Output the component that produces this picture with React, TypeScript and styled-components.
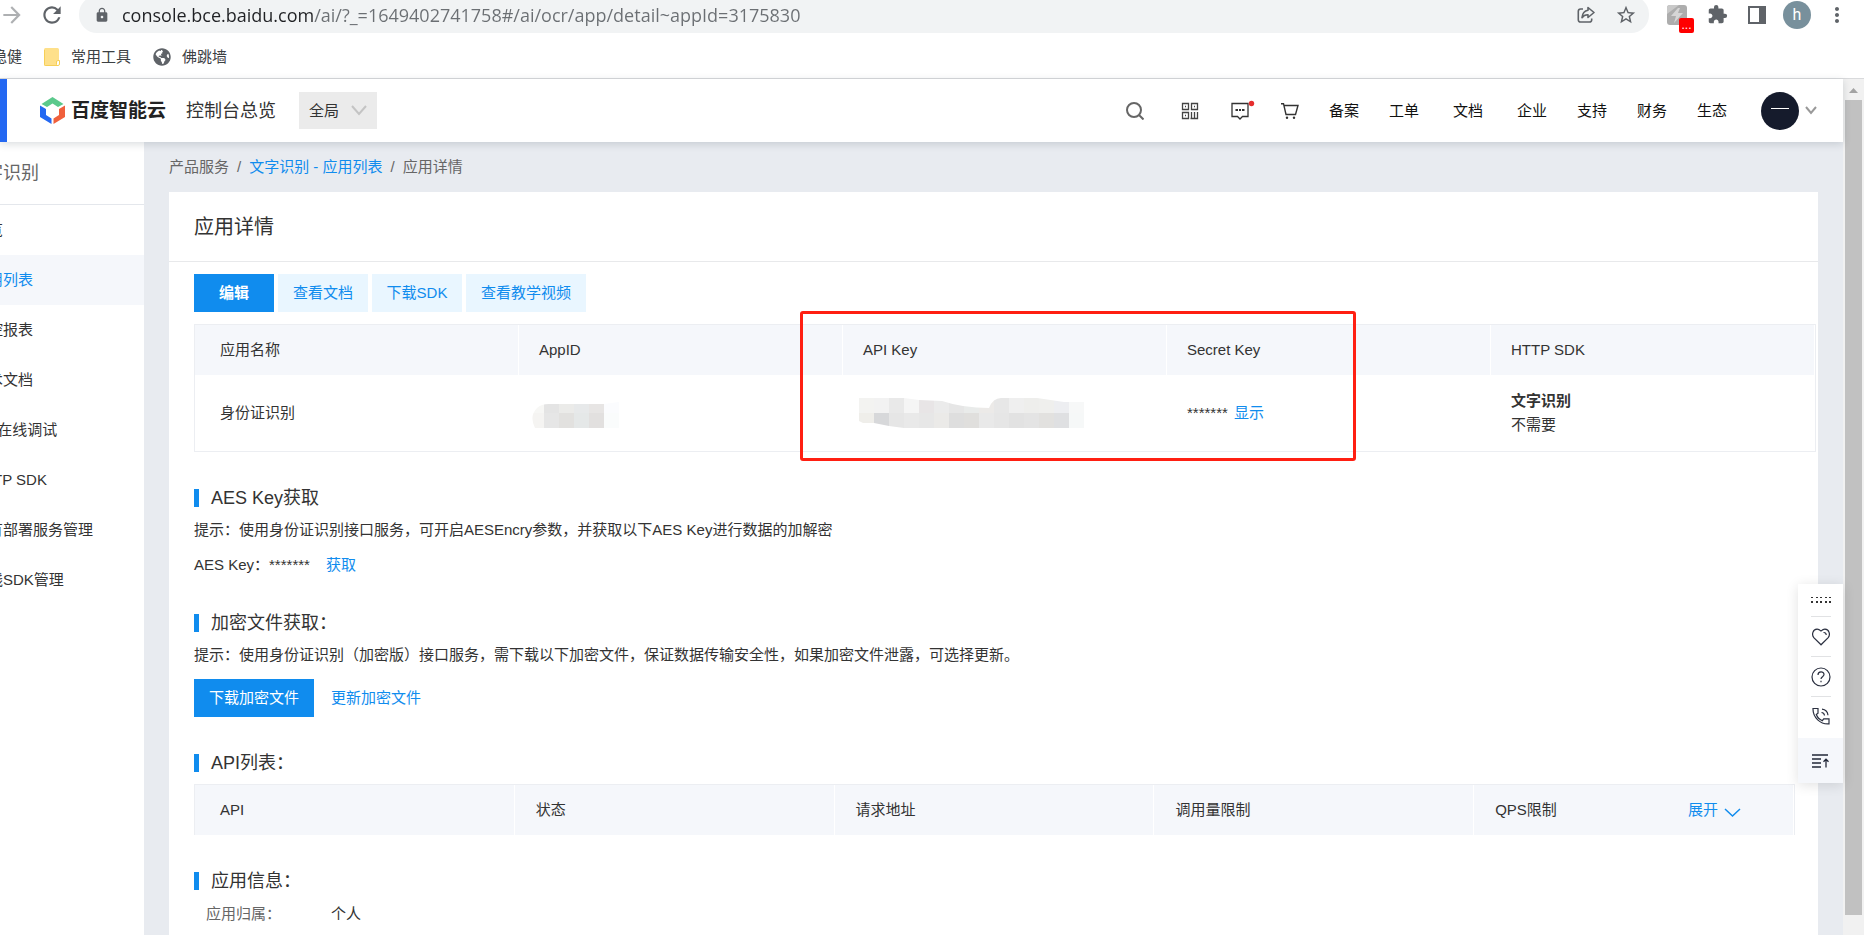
import React from "react";
import styled, { createGlobalStyle, css } from "styled-components";
import { FaGlobeAmericas } from "react-icons/fa";
import {
  MdArrowForward,
  MdExtension,
  MdLock,
  MdMoreVert,
  MdRefresh,
  MdStarBorder,
} from "react-icons/md";

const color = {
  text: "#333",
  muted: "#666",
  blue: "#108cee",
  paleBlue: "#e9f6ff",
  head: "#f5f7fb",
  line: "#eceef2",
  page: "#e8ebf0",
  chrome: "#5f6368",
};

const GlobalStyle = createGlobalStyle`
  *, *::before, *::after { box-sizing: border-box; }
  body {
    margin: 0;
    overflow: hidden;
    background: #fff;
    color: ${color.text};
    font-family: "Liberation Sans", "Noto Sans CJK SC", sans-serif;
    font-size: 15px;
    line-height: 24px;
  }
  button, input, select { font: inherit; color: inherit; }
  button { border: 0; padding: 0; background: none; cursor: pointer; }
  a { color: inherit; text-decoration: none; }
  svg { display: block; flex: none; }
`;

const Window = styled.div`
  display: flex;
  flex-direction: column;
  height: 100vh;
  overflow: hidden;
`;

/* ---------- browser bars ---------- */

const Toolbar = styled.div`
  display: flex;
  align-items: center;
  height: 33px;
  padding: 0 7px 4px 0;
  color: ${color.chrome};
`;

const ToolButton = styled.button<{ $width?: number; $faded?: boolean }>`
  display: flex;
  align-items: center;
  justify-content: center;
  flex: none;
  width: ${(p) => p.$width ?? 40}px;
  height: 28px;
  opacity: ${(p) => (p.$faded ? 0.5 : 1)};
`;

const NavButtons = styled.div`
  display: flex;
  gap: 15px;
  margin-right: 14px;
`;

const AddressBar = styled.form`
  display: flex;
  align-items: center;
  flex: 1;
  height: 37px;
  margin-right: 8px;
  padding: 0 3px 0 15px;
  border-radius: 18px;
  background: #f1f3f4;
`;

const AddressInput = styled.input`
  flex: 1;
  min-width: 0;
  height: 28px;
  margin-left: 12px;
  padding: 0;
  border: 0;
  outline: 0;
  color: #202124;
  font-family: "Open Sans", sans-serif;
  font-size: 18px;
  background: linear-gradient(90deg, #202124 191px, #6b6f73 191px);
  background-clip: text;
  -webkit-background-clip: text;
  -webkit-text-fill-color: transparent;
`;

const ExtensionMark = styled.span`
  position: relative;
  display: block;
  width: 20px;
  height: 20px;
`;

const ExtensionBadge = styled.span`
  position: absolute;
  left: 12px;
  top: 13px;
  width: 15px;
  height: 15px;
  border-radius: 2px;
  background: #f00;
  color: #fff;
  font-size: 12px;
  line-height: 14px;
  text-align: center;
`;

const Profile = styled.span`
  width: 28px;
  height: 28px;
  border-radius: 50%;
  background: #78909c;
  color: #fff;
  font-family: Roboto, sans-serif;
  font-size: 16px;
  line-height: 28px;
`;

const Bookmarks = styled.nav`
  display: flex;
  align-items: center;
  gap: 22px;
  height: 46px;
  margin-left: -8px;
  padding-top: 2px;
  border-bottom: 1px solid #d9dadc;
  color: #3c4043;
`;

const Bookmark = styled.a`
  display: flex;
  align-items: center;
  gap: 11px;
  white-space: nowrap;
`;

/* ---------- console frame ---------- */

const Viewport = styled.div`
  display: flex;
  flex: 1;
  min-height: 0;
`;

const Console = styled.div`
  position: relative;
  display: flex;
  flex-direction: column;
  flex: 1;
  min-width: 0;
`;

const Scrollbar = styled.div`
  display: flex;
  flex-direction: column;
  align-items: center;
  gap: 7px;
  width: 21px;
  padding: 9px 0 20px;
  background: #f1f1f1;
`;

const ScrollThumb = styled.div`
  flex: 1;
  width: 17px;
  background: #c1c1c1;
`;

const Header = styled.header`
  position: relative;
  z-index: 2;
  display: flex;
  align-items: center;
  flex: none;
  height: 63px;
  padding-right: 26px;
  border-left: 7px solid #2468f2;
  background: #fff;
  box-shadow: 0 2px 8px rgba(20, 40, 50, 0.16);
`;

const Logo = styled.a`
  display: flex;
  align-items: center;
  gap: 6px;
  margin: 0 20px 0 33px;
  color: #222;
  font-size: 19px;
  font-weight: 700;
  white-space: nowrap;
`;

const Overview = styled.a`
  margin-right: 23px;
  font-size: 18px;
  white-space: nowrap;
`;

const RegionPicker = styled.label`
  display: grid;
  align-items: center;
  width: 78px;
  height: 37px;
  background: #ebebeb;

  select,
  svg {
    grid-area: 1 / 1;
  }
  select {
    height: 37px;
    padding: 0 10px;
    border: 0;
    background: transparent;
    appearance: none;
  }
  svg {
    justify-self: end;
    margin-right: 10px;
    pointer-events: none;
  }
`;

const Shortcuts = styled.div`
  display: flex;
  align-items: center;
  gap: 32px;
  margin-left: auto;
`;

const SearchButton = styled.button`
  margin-right: 5px;
`;

const HeaderLink = styled.a<{ $wide?: boolean }>`
  margin-left: ${(p) => (p.$wide ? 34 : 30)}px;
  color: #111;
  white-space: nowrap;
`;

const Account = styled.button`
  display: flex;
  align-items: center;
  gap: 6px;
  margin-left: 34px;
`;

const Avatar = styled.span`
  display: flex;
  align-items: center;
  justify-content: center;
  width: 38px;
  height: 38px;
  border-radius: 50%;
  background: #151b2c;

  &::after {
    content: "";
    width: 18px;
    height: 1px;
    margin-bottom: 4px;
    background: #fff;
  }
`;

const Body = styled.div`
  display: flex;
  flex: 1;
  min-height: 0;
  background: ${color.page};
`;

const Sidebar = styled.aside`
  flex: none;
  width: 144px;
  overflow: hidden;
  background: #fff;
  white-space: nowrap;
`;

const SidebarTitle = styled.h2`
  height: 63px;
  margin: 0;
  border-bottom: 1px solid #e4e7ec;
  color: ${color.muted};
  font-size: 18px;
  font-weight: 400;
  line-height: 62px;
  text-indent: -33px;
`;

const SidebarLink = styled.a<{ $active?: boolean }>`
  display: block;
  height: 50px;
  line-height: 50px;
  text-indent: -27px;
  ${(p) =>
    p.$active &&
    css`
      background: ${color.head};
      color: ${color.blue};
    `}
`;

const Main = styled.main`
  flex: 1;
  min-width: 0;
  padding: 0 25px;
`;

const Breadcrumb = styled.nav`
  display: flex;
  align-items: center;
  gap: 8px;
  height: 50px;
  color: ${color.muted};
`;

const Link = styled.a`
  color: ${color.blue};
`;

/* ---------- detail card ---------- */

const Card = styled.section`
  min-height: 100%;
  background: #fff;
`;

const CardTitle = styled.h1`
  margin: 0;
  padding: 2px 25px 0;
  border-bottom: 1px solid #e8e9eb;
  font-size: 20px;
  font-weight: 400;
  line-height: 67px;
`;

const CardBody = styled.div`
  padding: 12px 2px 40px 25px;
`;

const Actions = styled.div`
  display: flex;
  gap: 4px;
  margin-bottom: 12px;
`;

const Button = styled.button<{ $primary?: boolean; $strong?: boolean; $width: number }>`
  width: ${(p) => p.$width}px;
  height: 38px;
  background: ${(p) => (p.$primary ? color.blue : color.paleBlue)};
  color: ${(p) => (p.$primary ? "#fff" : color.blue)};
  font-weight: ${(p) => (p.$strong ? 700 : 400)};
`;

const TableFrame = styled.div`
  position: relative;
`;

const Highlight = styled.div`
  position: absolute;
  top: -13px;
  bottom: -9px;
  left: calc(40% - 43px);
  right: calc(20% + 136px);
  border: 3px solid #ff1f12;
  border-radius: 3px;
  pointer-events: none;
`;

const Table = styled.table`
  width: 100%;
  border: 1px solid ${color.line};
  border-collapse: separate;
  border-spacing: 0;
  table-layout: fixed;
  text-align: left;

  th,
  td {
    padding: 0 20px;
    font-weight: 400;
  }
  th {
    height: 50px;
    border-right: 1px solid #fff;
    background: ${color.head};
  }
  td {
    height: 76px;
  }
  th:first-child,
  td:first-child {
    padding-left: 25px;
  }
`;

const ApiTable = styled(Table)`
  width: calc(100% - 21px);
  border-bottom: 0;

  th {
    padding: 0 20px 0 21px;
  }
`;

const LastHead = styled.div`
  display: flex;
  justify-content: space-between;
  padding-right: 32px;
`;

const ExpandButton = styled.button`
  display: flex;
  align-items: center;
  gap: 6px;
  color: ${color.blue};

  svg {
    margin-top: 6px;
  }
`;

const Section = styled.section`
  margin-top: 33px;
`;

const SectionTitle = styled.h2<{ $gap?: number }>`
  display: flex;
  align-items: center;
  gap: 12px;
  margin: 0 0 ${(p) => p.$gap ?? 7}px;
  font-size: 18px;
  font-weight: 400;
  line-height: 26px;

  &::before {
    content: "";
    width: 5px;
    height: 18px;
    background: ${color.blue};
  }
`;

const Tip = styled.p`
  margin: 0;
`;

const Masked = styled.span<{ $gap: number }>`
  margin-right: ${(p) => p.$gap}px;
`;

const KeyLine = styled.p`
  margin: 11px 0 0;
`;

const FileLine = styled.div`
  display: flex;
  align-items: center;
  gap: 17px;
  margin-top: 12px;
`;

const InfoList = styled.dl`
  display: grid;
  grid-template-columns: 125px 1fr;
  margin: 0;
  padding-left: 12px;

  dt {
    color: ${color.muted};
  }
  dd {
    margin: 0;
  }
`;

const MosaicSvg = styled.svg`
  margin: 0 0 0 -8px;
`;

/* ---------- floating helper ---------- */

const Helper = styled.div`
  position: absolute;
  z-index: 3;
  right: 0;
  bottom: 152px;
  display: flex;
  flex-direction: column;
  align-items: center;
  width: 45px;
  background: #fff;
  box-shadow: 0 2px 12px rgba(0, 0, 0, 0.12);
`;

const HelperButton = styled.button<{ $height?: number; $filled?: boolean; $line?: boolean }>`
  display: flex;
  align-items: center;
  justify-content: center;
  width: ${(p) => (p.$filled ? "100%" : "20px")};
  height: ${(p) => p.$height ?? 40}px;
  margin-top: ${(p) => (p.$filled ? 4 : 0)}px;
  border-bottom: ${(p) => (p.$line ? "1px solid #e1e2e4" : "0")};
  background: ${(p) => (p.$filled ? color.head : "none")};
`;

/* ---------- drawings ---------- */

const Chevron = ({ width, height, stroke, weight = 2 }: { width: number; height: number; stroke: string; weight?: number }) => (
  <svg width={width} height={height} viewBox={`0 0 ${width} ${height}`} fill="none" stroke={stroke} strokeWidth={weight}>
    <path d={`M1 1 L${width / 2} ${height - 2} L${width - 1} 1`} />
  </svg>
);

const ShareIcon = () => (
  <svg width="18" height="18" viewBox="0 0 18 18" fill="none" stroke={color.chrome} strokeWidth="1.6" strokeLinejoin="round">
    <path d="M6 3H3.6A2.3 2.3 0 0 0 1.3 5.300v8.400A2.300 2.300 0 0 0 3.600 16h8.800a2.300 2.300 0 0 0 2.300-2.300V12.500" />
    <path d="M11 1.500 17 6.500 11 11.500V8.700C8.500 8.600 6.500 9.400 5 11.700 5.400 7.600 7.300 4.800 11 4.300Z" />
  </svg>
);

const PanelIcon = () => (
  <svg width="18" height="18" viewBox="0 0 18 18">
    <path d="M0 0h18v18H0zM2 2v14h9V2z" fill={color.chrome} fillRule="evenodd" />
  </svg>
);

const BoltIcon = () => (
  <svg width="20" height="20" viewBox="0 0 20 20">
    <rect width="20" height="20" rx="3" fill="#adadad" />
    <path d="M0 3a3 3 0 0 1 3-3h9L0 9z" fill="#c9c9c9" />
    <path d="M11 3 4 11h5l-2 7 9-10h-5l2-5z" fill="#d6d6d6" />
  </svg>
);

const FolderIcon = () => (
  <svg width="16" height="18" viewBox="0 0 16 18">
    <path d="M1.500 0h12A1.500 1.500 0 0 1 15 1.500V12h-2v6H1.500A1.500 1.500 0 0 1 0 16.500v-15A1.500 1.500 0 0 1 1.500 0z" fill="#fee08a" />
    <path d="M.5 2v14.500a1 1 0 0 0 1 1H14a1.500 1.500 0 0 0 1.500-1.500v-3.500H14a1.500 1.500 0 0 0-1.500 1.500v2.500" fill="none" stroke="#f6cf57" />
  </svg>
);

const LogoIcon = () => (
  <svg width="25" height="27" viewBox="0 0 25 27">
    <path d="M1.500 7 12.500 0l11 7-5.500 3-5.500-3.500L7 10z" fill="#5bc98c" />
    <path d="M0 8.500 6 12v6l5.500 3.500V27L0 20z" fill="#2468f2" />
    <path d="M25 8.500 19 12v6l-5.500 3.500V27L25 20z" fill="#f0603c" />
  </svg>
);

const SearchIcon = () => (
  <svg width="18" height="18" viewBox="0 0 18 18" fill="none" stroke="#666" strokeWidth="2">
    <circle cx="8" cy="8" r="7" />
    <path d="m13 13 4.500 4.500" />
  </svg>
);

const QrIcon = () => (
  <svg width="18" height="18" viewBox="0 0 18 18" fill="none" stroke="#444" strokeWidth="1.300">
    <path d="M1.500 1.500h6v6h-6zM10.500 1.500h6v6h-6zM1.500 10.500h6v6h-6z" />
    <path d="M4 4.500h1M13 4.500h1M4 13.500h1M10.500 10v6.500M13.500 10v6.500M16.500 10v6.500h-7" />
  </svg>
);

const MessageIcon = () => (
  <svg width="18" height="18" viewBox="0 0 18 18" overflow="visible" fill="none" stroke="#333" strokeWidth="1.300">
    <path d="M1 1.500h16v13h-5.500L9 17l-2.500-2.500H1z" />
    <path d="M4.500 8h2.500M8 8h2M11 8h2.500" strokeWidth="1.800" />
    <circle cx="20.500" cy="1.500" r="2.700" fill="#e62e2e" stroke="none" />
  </svg>
);

const CartIcon = () => (
  <svg width="18" height="18" viewBox="0 0 18 18" fill="none" stroke="#333" strokeWidth="1.400">
    <path d="M0 1.700h2.500L5 12.500h9.500L17 3.500H3" />
    <circle cx="6" cy="15.700" r="1.200" fill="#333" stroke="none" />
    <circle cx="13" cy="15.700" r="1.200" fill="#333" stroke="none" />
  </svg>
);

const DragDots = () => (
  <svg width="20" height="6" viewBox="0 0 20 6" fill="#333">
    {[0, 5, 9, 14, 18].map((x) => (
      <React.Fragment key={x}>
        <rect x={x} y="0" width="2" height="1" />
        <rect x={x} y="4" width="2" height="2" />
      </React.Fragment>
    ))}
  </svg>
);

const HeartIcon = () => (
  <svg width="18" height="18" viewBox="0 0 18 18" fill="none" stroke="#2b3040" strokeWidth="1.200">
    <path d="M9 16.800 1.800 9.700C-.6 6.500.8 1.500 5 1.200 7 1.100 8.200 2.300 9 3c.8-.7 2-1.900 4-1.800 4.200.3 5.600 5.300 3.200 8.500z" />
    <path d="M11.500 4.500c1.800-.2 2.700 1 2.700 2.500" />
  </svg>
);

const HelpIcon = () => (
  <svg width="20" height="20" viewBox="0 0 20 20" fill="none" stroke="#2b3040" strokeWidth="1.200">
    <circle cx="10" cy="10" r="9" />
    <path d="M7 8c0-4 6-4 6-.5C13 9.700 10 9.700 10 12M10 13.800v1.400" />
  </svg>
);

const PhoneIcon = () => (
  <svg width="18" height="18" viewBox="0 0 18 18" fill="none" stroke="#2b3040" strokeWidth="1.200">
    <path d="M1 1.500h5v4.800L4.300 7.500c1 2.800 3 4.900 6 6.200l1.400-1.800H17v5C8.500 17.600.7 10.500 1 1.500z" />
    <path d="M9.500 5.500c1.800.2 2.800 1.300 3 3M10 2.200c3.500.4 5.600 2.600 6 6" />
  </svg>
);

const CollapseIcon = () => (
  <svg width="17" height="14" viewBox="0 0 17 14" fill="none" stroke="#222838" strokeWidth="1.300">
    <path d="M0 1h16M0 5h9M0 9h9M0 13h9M14 13.500V5.500M11.500 7.800 14 5.200l2.500 2.600" />
  </svg>
);

/* Pixelated cover over a private value. */
const Mosaic = ({ id, width, start, shape, rows }: { id: string; width: number; start: number; shape: string; rows: string[][] }) => (
  <MosaicSvg width={width} height="30" viewBox={`0 0 ${width} 30`}>
    <clipPath id={id}>
      <path d={shape} />
    </clipPath>
    <g clipPath={`url(#${id})`} shapeRendering="crispEdges">
      {rows.map((row, y) =>
        row.map((fill, x) => <rect key={`${x}-${y}`} x={start + x * 15} y={y * 15} width="15" height="15" fill={`#${fill}`} />)
      )}
    </g>
  </MosaicSvg>
);

const appIdRows = [
  "f7f7f5 e4e4e4 ebebe9 e7e9ea e7e5e4 fbfcfe".split(" "),
  "f5f4f2 e6e6e6 e2e1df e5e8e8 e2e0df fafcfc".split(" "),
];

const apiKeyRows = [
  "f3f3f1 f2f2f2 e9e9e9 f5f5f5 e8e5e6 ebebeb e6e6e6 e9ebea eceae8 e7e7e7 efefef eeeeec efefed edeef1 f7f8f8".split(" "),
  "efeeea d7d8da e6e6e6 e9e9e9 e7e7e7 ebeae8 dedede e0dfdd e9e9e9 e6e6e6 e2e2e2 e4e4e4 e2e1df dfe0e2 f6f8f8".split(" "),
];

const sideItems = ["概览", "应用列表", "监控报表", "技术文档", "API在线调试", "HTTP SDK", "私有部署服务管理", "离线SDK管理"];

const headerLinks = [
  { label: "备案" },
  { label: "工单" },
  { label: "文档", wide: true },
  { label: "企业", wide: true },
  { label: "支持" },
  { label: "财务" },
  { label: "生态" },
];

export default function App() {
  return (
    <Window lang="zh-CN">
      <GlobalStyle />
      <Toolbar>
        <NavButtons>
          <ToolButton $width={24} $faded aria-label="前进"><MdArrowForward size={26} /></ToolButton>
          <ToolButton $width={26} aria-label="刷新"><MdRefresh size={26} /></ToolButton>
        </NavButtons>
        <AddressBar>
          <MdLock size={16} />
          <AddressInput
            aria-label="地址"
            defaultValue="console.bce.baidu.com/ai/?_=1649402741758#/ai/ocr/app/detail~appId=3175830"
          />
          <ToolButton type="button" aria-label="分享"><ShareIcon /></ToolButton>
          <ToolButton type="button" aria-label="收藏"><MdStarBorder size={22} /></ToolButton>
        </AddressBar>
        <ToolButton aria-label="插件">
          <ExtensionMark>
            <BoltIcon />
            <ExtensionBadge>...</ExtensionBadge>
          </ExtensionMark>
        </ToolButton>
        <ToolButton aria-label="扩展程序"><MdExtension size={21} /></ToolButton>
        <ToolButton aria-label="侧边栏"><PanelIcon /></ToolButton>
        <ToolButton aria-label="个人资料"><Profile>h</Profile></ToolButton>
        <ToolButton aria-label="菜单"><MdMoreVert size={24} /></ToolButton>
      </Toolbar>

      <Bookmarks aria-label="书签">
        <Bookmark href="#steady">稳健</Bookmark>
        <Bookmark href="#tools"><FolderIcon />常用工具</Bookmark>
        <Bookmark href="#soup"><FaGlobeAmericas size={18} color={color.chrome} />佛跳墙</Bookmark>
      </Bookmarks>

      <Viewport>
        <Console>
          <Header>
            <Logo href="#home"><LogoIcon />百度智能云</Logo>
            <Overview href="#overview">控制台总览</Overview>
            <RegionPicker>
              <select aria-label="区域" defaultValue="all">
                <option value="all">全局</option>
              </select>
              <Chevron width={16} height={11} stroke="#c4c4c4" />
            </RegionPicker>
            <Shortcuts>
              <SearchButton aria-label="搜索"><SearchIcon /></SearchButton>
              <button aria-label="二维码"><QrIcon /></button>
              <button aria-label="消息"><MessageIcon /></button>
              <button aria-label="购物车"><CartIcon /></button>
            </Shortcuts>
            {headerLinks.map((item) => (
              <HeaderLink key={item.label} href="#nav" $wide={item.wide}>{item.label}</HeaderLink>
            ))}
            <Account aria-label="账号">
              <Avatar />
              <Chevron width={12} height={9} stroke="#999" />
            </Account>
          </Header>

          <Body>
            <Sidebar>
              <SidebarTitle>文字识别</SidebarTitle>
              <nav>
                {sideItems.map((item) => (
                  <SidebarLink key={item} href="#side" $active={item === "应用列表"}>{item}</SidebarLink>
                ))}
              </nav>
            </Sidebar>

            <Main>
              <Breadcrumb aria-label="面包屑">
                <span>产品服务</span>
                <span>/</span>
                <Link href="#list">文字识别 - 应用列表</Link>
                <span>/</span>
                <span>应用详情</span>
              </Breadcrumb>

              <Card>
                <CardTitle>应用详情</CardTitle>
                <CardBody>
                  <Actions>
                    <Button $primary $strong $width={80}>编辑</Button>
                    <Button $width={90}>查看文档</Button>
                    <Button $width={90}>下载SDK</Button>
                    <Button $width={120}>查看教学视频</Button>
                  </Actions>

                  <TableFrame>
                    <Table>
                      <thead>
                        <tr>
                          <th>应用名称</th>
                          <th>AppID</th>
                          <th>API Key</th>
                          <th>Secret Key</th>
                          <th>HTTP SDK</th>
                        </tr>
                      </thead>
                      <tbody>
                        <tr>
                          <td>身份证识别</td>
                          <td>
                            <Mosaic
                              id="app-id"
                              width={90}
                              start={-2}
                              rows={appIdRows}
                              shape="M4 30Q-2 18 6 10Q10 6 18 6H73L88 4V30Z"
                            />
                          </td>
                          <td>
                            <Mosaic
                              id="api-key"
                              width={229}
                              start={4}
                              rows={apiKeyRows}
                              shape="M4 0H49L64 2 87 3Q108 10 134 10 138 0 146 0H182L209 4H229V30H49L34 28 19 25H8L4 23Z"
                            />
                          </td>
                          <td><Masked $gap={6}>*******</Masked><Link href="#show">显示</Link></td>
                          <td><strong>文字识别</strong><br />不需要</td>
                        </tr>
                      </tbody>
                    </Table>
                    <Highlight />
                  </TableFrame>

                  <Section>
                    <SectionTitle>AES Key获取</SectionTitle>
                    <Tip>提示：使用身份证识别接口服务，可开启AESEncry参数，并获取以下AES Key进行数据的加解密</Tip>
                    <KeyLine>AES Key：<Masked $gap={16}>*******</Masked><Link href="#get">获取</Link></KeyLine>
                  </Section>

                  <Section>
                    <SectionTitle>加密文件获取：</SectionTitle>
                    <Tip>提示：使用身份证识别（加密版）接口服务，需下载以下加密文件，保证数据传输安全性，如果加密文件泄露，可选择更新。</Tip>
                    <FileLine>
                      <Button $primary $width={120}>下载加密文件</Button>
                      <Link href="#renew">更新加密文件</Link>
                    </FileLine>
                  </Section>

                  <Section>
                    <SectionTitle $gap={8}>API列表：</SectionTitle>
                    <ApiTable>
                      <thead>
                        <tr>
                          <th>API</th>
                          <th>状态</th>
                          <th>请求地址</th>
                          <th>调用量限制</th>
                          <th>
                            <LastHead>
                              QPS限制
                              <ExpandButton>展开<Chevron width={17} height={10} stroke={color.blue} weight={1.5} /></ExpandButton>
                            </LastHead>
                          </th>
                        </tr>
                      </thead>
                    </ApiTable>
                  </Section>

                  <Section>
                    <SectionTitle $gap={8}>应用信息：</SectionTitle>
                    <InfoList>
                      <dt>应用归属：</dt>
                      <dd>个人</dd>
                    </InfoList>
                  </Section>
                </CardBody>
              </Card>
            </Main>
          </Body>

          <Helper>
            <HelperButton $height={33} $line aria-label="拖动"><DragDots /></HelperButton>
            <HelperButton $line aria-label="收藏产品"><HeartIcon /></HelperButton>
            <HelperButton $line aria-label="帮助"><HelpIcon /></HelperButton>
            <HelperButton $height={37} aria-label="电话"><PhoneIcon /></HelperButton>
            <HelperButton $height={45} $filled aria-label="收起"><CollapseIcon /></HelperButton>
          </Helper>
        </Console>
        <Scrollbar aria-hidden>
          <svg width="9" height="5" viewBox="0 0 9 5"><path d="M0 5 4.500 0 9 5z" fill="#a3a3a3" /></svg>
          <ScrollThumb />
        </Scrollbar>
      </Viewport>
    </Window>
  );
}
